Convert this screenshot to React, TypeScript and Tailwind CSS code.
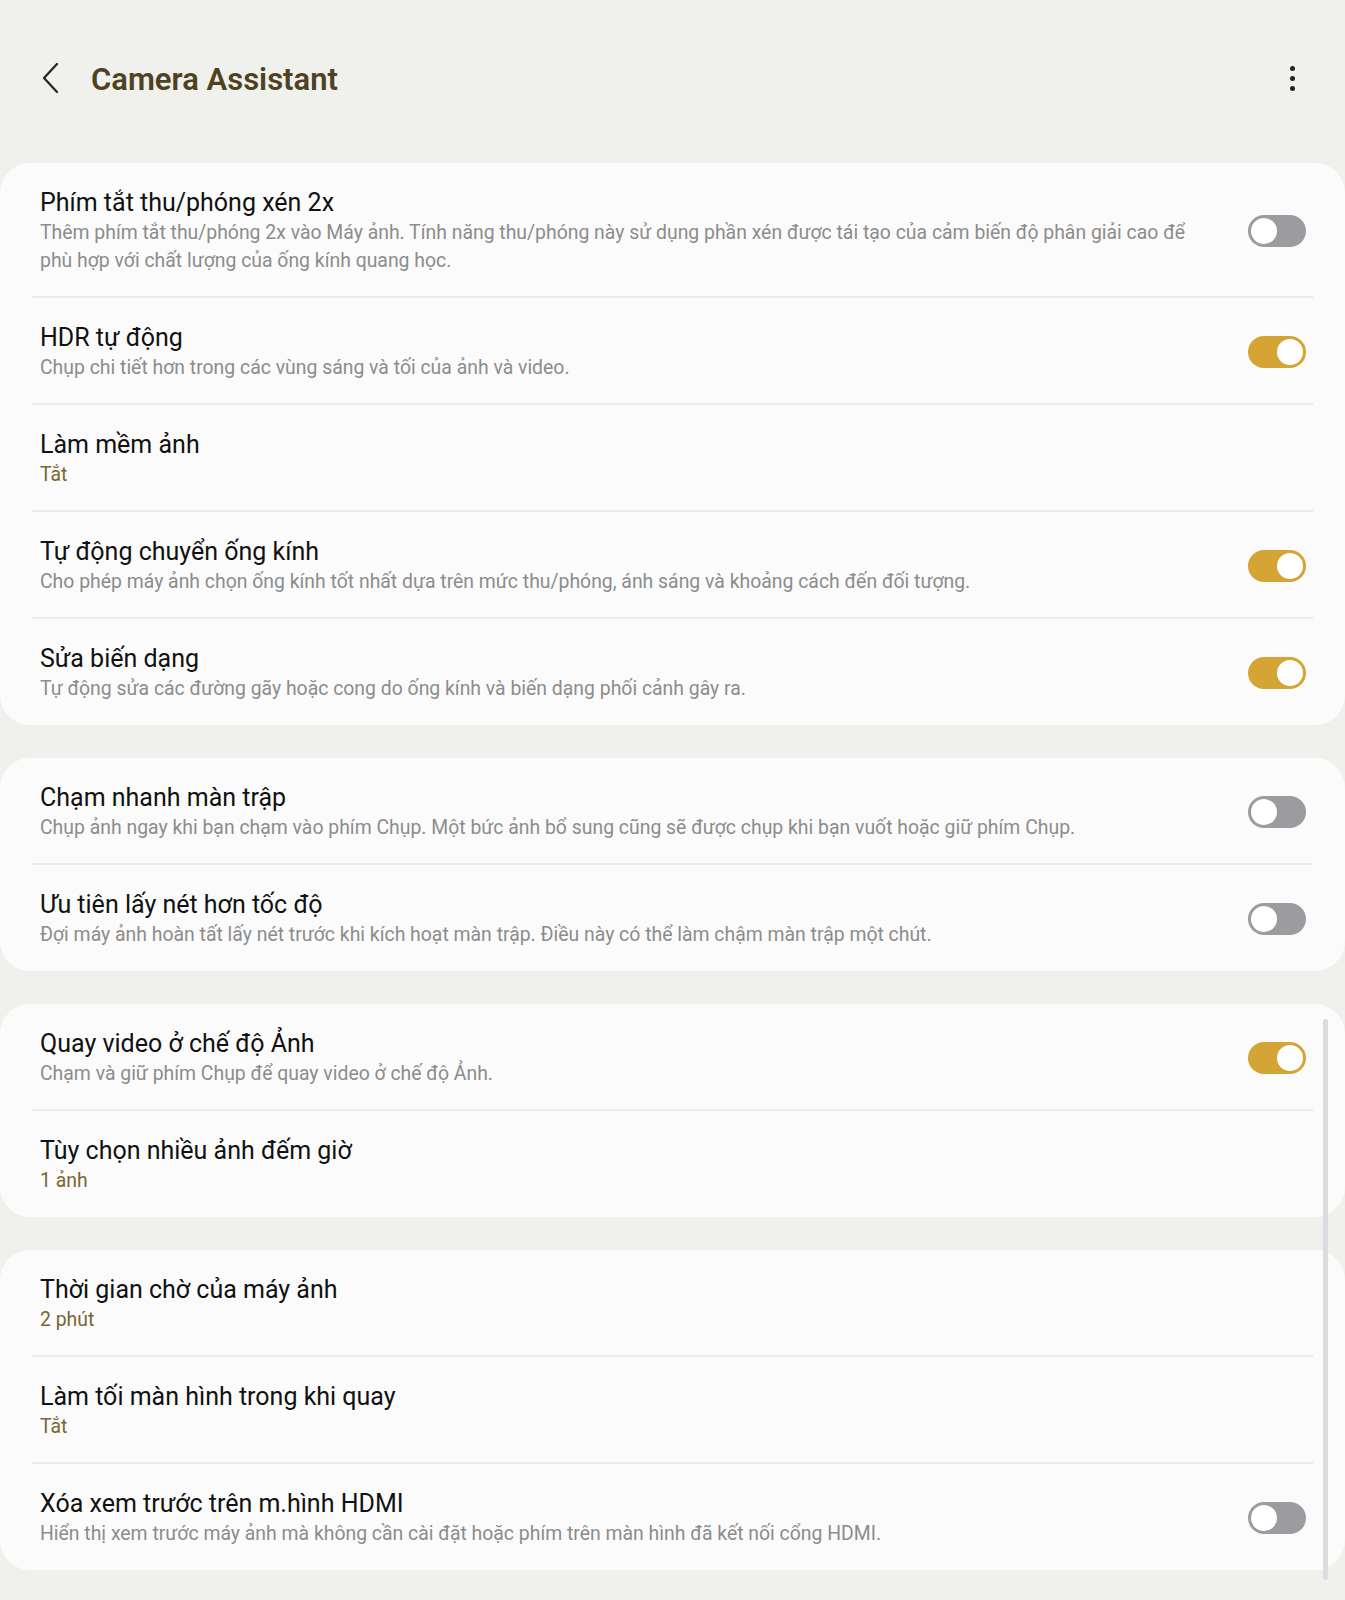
import React from "react";

interface Setting {
  title: string;
  desc?: string;
  value?: string;
  toggle?: boolean;
}

const groups: Setting[][] = [
  [
    {
      title: "Phím tắt thu/phóng xén 2x",
      desc: "Thêm phím tắt thu/phóng 2x vào Máy ảnh. Tính năng thu/phóng này sử dụng phần xén được tái tạo của cảm biến độ phân giải cao để phù hợp với chất lượng của ống kính quang học.",
      toggle: false,
    },
    {
      title: "HDR tự động",
      desc: "Chụp chi tiết hơn trong các vùng sáng và tối của ảnh và video.",
      toggle: true,
    },
    { title: "Làm mềm ảnh", value: "Tắt" },
    {
      title: "Tự động chuyển ống kính",
      desc: "Cho phép máy ảnh chọn ống kính tốt nhất dựa trên mức thu/phóng, ánh sáng và khoảng cách đến đối tượng.",
      toggle: true,
    },
    {
      title: "Sửa biến dạng",
      desc: "Tự động sửa các đường gãy hoặc cong do ống kính và biến dạng phối cảnh gây ra.",
      toggle: true,
    },
  ],
  [
    {
      title: "Chạm nhanh màn trập",
      desc: "Chụp ảnh ngay khi bạn chạm vào phím Chụp. Một bức ảnh bổ sung cũng sẽ được chụp khi bạn vuốt hoặc giữ phím Chụp.",
      toggle: false,
    },
    {
      title: "Ưu tiên lấy nét hơn tốc độ",
      desc: "Đợi máy ảnh hoàn tất lấy nét trước khi kích hoạt màn trập. Điều này có thể làm chậm màn trập một chút.",
      toggle: false,
    },
  ],
  [
    {
      title: "Quay video ở chế độ Ảnh",
      desc: "Chạm và giữ phím Chụp để quay video ở chế độ Ảnh.",
      toggle: true,
    },
    { title: "Tùy chọn nhiều ảnh đếm giờ", value: "1 ảnh" },
  ],
  [
    { title: "Thời gian chờ của máy ảnh", value: "2 phút" },
    { title: "Làm tối màn hình trong khi quay", value: "Tắt" },
    {
      title: "Xóa xem trước trên m.hình HDMI",
      desc: "Hiển thị xem trước máy ảnh mà không cần cài đặt hoặc phím trên màn hình đã kết nối cổng HDMI.",
      toggle: false,
    },
  ],
];

const Toggle = ({ on }: { on: boolean }) => (
  <div
    className={
      on
        ? "flex h-[32px] w-[58px] shrink-0 items-center justify-end rounded-full bg-[#d4a535] px-[3px]"
        : "flex h-[32px] w-[58px] shrink-0 items-center justify-start rounded-full bg-[#9b9ba0] px-[3px]"
    }
  >
    <div className="h-[26px] w-[26px] rounded-full bg-white" />
  </div>
);

const Row = ({ item, last }: { item: Setting; last: boolean }) => (
  <div className={last ? "flex items-center pl-10 pr-[39px] pt-6 pb-[22px]" : "flex items-center pl-10 pr-[39px] pt-6 pb-[21px]"}>
    <div className="min-w-0 flex-1 pr-[50px]">
      <div className="text-[25px] leading-[32px] text-[#111111]">{item.title}</div>
      {item.desc && (
        <div className="text-[19.4px] leading-[28px] text-[#8c8c8c]">{item.desc}</div>
      )}
      {item.value && (
        <div className="text-[19.4px] leading-[28px] text-[#7a6630]">{item.value}</div>
      )}
    </div>
    {item.toggle !== undefined && <Toggle on={item.toggle} />}
  </div>
);

export default function App() {
  return (
    <div className="relative min-h-[1600px] bg-[#f0f0ec] font-['Roboto',sans-serif]">
      {/* Header */}
      <div className="flex h-[156px] items-center pl-[42px] pr-[50px]">
        <svg width="18" height="32" viewBox="0 0 18 32" className="shrink-0">
          <path d="M15 2 L2 16 L15 30" fill="none" stroke="#222" strokeWidth="2.2" strokeLinecap="round" strokeLinejoin="round" />
        </svg>
        <h1 className="ml-[31px] mt-[4px] flex-1 text-[31px] font-semibold text-[#4d4222]">Camera Assistant</h1>
        <div className="flex flex-col items-center gap-[5px]">
          <div className="h-[5px] w-[5px] rounded-full bg-[#222]" />
          <div className="h-[5px] w-[5px] rounded-full bg-[#222]" />
          <div className="h-[5px] w-[5px] rounded-full bg-[#222]" />
        </div>
      </div>

      <div className="mt-[7px] flex flex-col gap-[33px]">
        {groups.map((group, gi) => (
          <div key={gi} className="rounded-[30px] bg-[#fbfbfb]">
            {group.map((item, i) => (
              <div key={i}>
                {i > 0 && <div className="mx-8 h-[2px] bg-[#ebebeb]" />}
                <Row item={item} last={i === group.length - 1} />
              </div>
            ))}
          </div>
        ))}
      </div>

      {/* scrollbar */}
      <div className="absolute left-[1323px] top-[1019px] h-[561px] w-[5px] rounded-full bg-[#dcdce0]" />
    </div>
  );
}
